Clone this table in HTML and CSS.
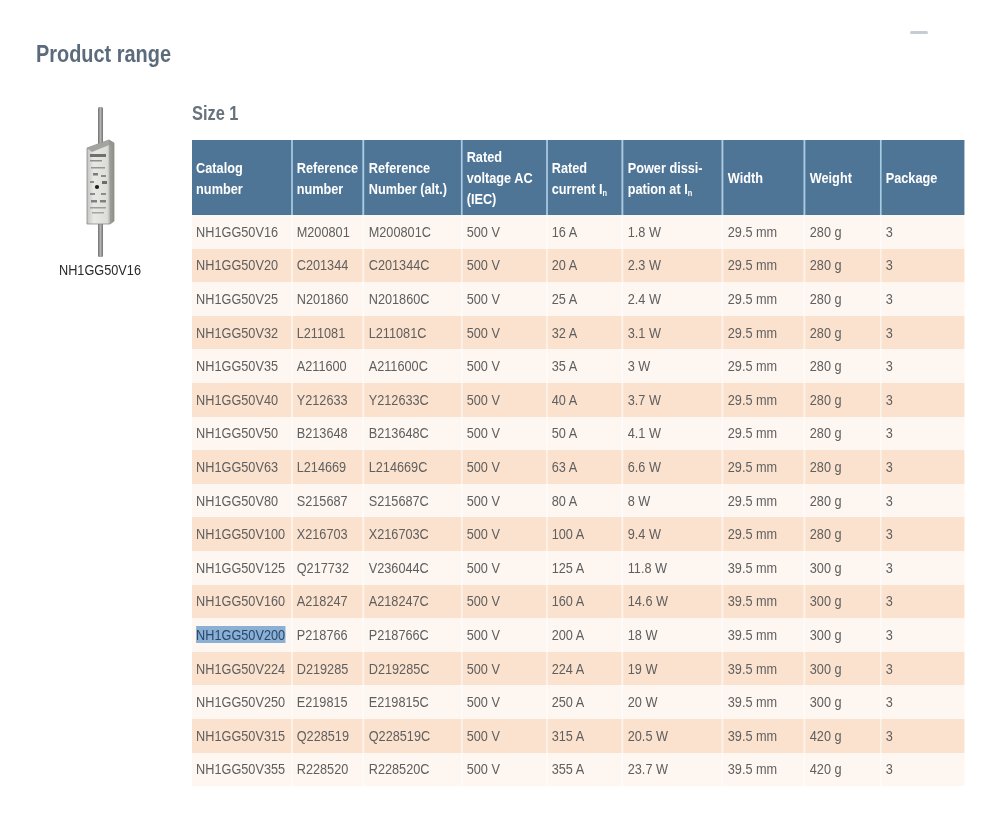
FILE: index.html
```html
<!DOCTYPE html>
<html lang="en">
<head>
<meta charset="utf-8">
<title>Product range</title>
<link rel="stylesheet" href="styles.css">
</head>
<body>
<div class="page">
  <header class="top">
    <h1 class="title">Product range</h1>
    <span class="smudge"></span>
  </header>
  <div class="main">
    <aside class="figure">
      <svg class="fuse" width="60" height="150" viewBox="0 0 60 150" aria-hidden="true">
        <defs>
          <linearGradient id="blade" x1="0" x2="1">
            <stop offset="0" stop-color="#6e6e6e"/>
            <stop offset="0.5" stop-color="#b4b4b4"/>
            <stop offset="1" stop-color="#707070"/>
          </linearGradient>
          <linearGradient id="bodyg" x1="0" x2="1">
            <stop offset="0" stop-color="#c4c4c0"/>
            <stop offset="0.25" stop-color="#e8e8e4"/>
            <stop offset="0.75" stop-color="#dcdcd8"/>
            <stop offset="0.85" stop-color="#b3b3af"/>
            <stop offset="1" stop-color="#9a9a96"/>
          </linearGradient>
        </defs>
        <rect x="28" y="0" width="5" height="40" rx="1.5" fill="url(#blade)"/>
        <rect x="28" y="112" width="5" height="38" rx="1.5" fill="url(#blade)"/>
        <path d="M17 41 L39 33 L44 36 L44 114 L40 117 L17 117 Z" fill="url(#bodyg)" stroke="#8a8a86" stroke-width="0.8"/>
        <path d="M17 41 L39 33 L44 36 L22 45 Z" fill="#a3a39f"/>
        <path d="M39 33 L44 36 L44 114 L40 117 Z" fill="#8d8d89" opacity="0.6"/>
        <rect x="20" y="47" width="16" height="3" fill="#707070"/>
        <rect x="20" y="53" width="12" height="1.5" fill="#8f8f8f"/>
        <rect x="21" y="60" width="14" height="1.5" fill="#959595"/>
        <rect x="23" y="66" width="5" height="2.5" fill="#7c7c7c"/>
        <rect x="31" y="68" width="5" height="2" fill="#8c8c8c"/>
        <rect x="20" y="74" width="4" height="2" fill="#8c8c8c"/>
        <rect x="32" y="74" width="5" height="3" fill="#6c6c6c"/>
        <circle cx="27" cy="80" r="2.1" fill="#1a1a1a"/>
        <rect x="20" y="86" width="5" height="2" fill="#8c8c8c"/>
        <rect x="31" y="86" width="5" height="2" fill="#8c8c8c"/>
        <rect x="21" y="93" width="6" height="2.5" fill="#808080"/>
        <rect x="30" y="93" width="6" height="2.5" fill="#808080"/>
        <rect x="20" y="100" width="16" height="1.5" fill="#9d9d9d"/>
        <rect x="22" y="105" width="12" height="1.5" fill="#a4a4a4"/>
      </svg>
      <p class="caption">NH1GG50V16</p>
    </aside>
    <section class="range">
      <h2 class="size">Size 1</h2>
      <table class="grid">
        <colgroup>
          <col class="c1"><col class="c2"><col class="c3"><col class="c4"><col class="c5"><col class="c6"><col class="c7"><col class="c8"><col class="c9">
        </colgroup>
        <thead>
          <tr>
            <th>Catalog<br>number</th>
            <th>Reference<br>number</th>
            <th>Reference<br>Number (alt.)</th>
            <th>Rated<br>voltage AC<br>(IEC)</th>
            <th>Rated<br>current I<sub>n</sub></th>
            <th>Power dissi-<br>pation at I<sub>n</sub></th>
            <th>Width</th>
            <th>Weight</th>
            <th>Package</th>
          </tr>
        </thead>
        <tbody>
          <tr><td>NH1GG50V16</td><td>M200801</td><td>M200801C</td><td>500 V</td><td>16 A</td><td>1.8 W</td><td>29.5 mm</td><td>280 g</td><td>3</td></tr>
          <tr><td>NH1GG50V20</td><td>C201344</td><td>C201344C</td><td>500 V</td><td>20 A</td><td>2.3 W</td><td>29.5 mm</td><td>280 g</td><td>3</td></tr>
          <tr><td>NH1GG50V25</td><td>N201860</td><td>N201860C</td><td>500 V</td><td>25 A</td><td>2.4 W</td><td>29.5 mm</td><td>280 g</td><td>3</td></tr>
          <tr><td>NH1GG50V32</td><td>L211081</td><td>L211081C</td><td>500 V</td><td>32 A</td><td>3.1 W</td><td>29.5 mm</td><td>280 g</td><td>3</td></tr>
          <tr><td>NH1GG50V35</td><td>A211600</td><td>A211600C</td><td>500 V</td><td>35 A</td><td>3 W</td><td>29.5 mm</td><td>280 g</td><td>3</td></tr>
          <tr><td>NH1GG50V40</td><td>Y212633</td><td>Y212633C</td><td>500 V</td><td>40 A</td><td>3.7 W</td><td>29.5 mm</td><td>280 g</td><td>3</td></tr>
          <tr><td>NH1GG50V50</td><td>B213648</td><td>B213648C</td><td>500 V</td><td>50 A</td><td>4.1 W</td><td>29.5 mm</td><td>280 g</td><td>3</td></tr>
          <tr><td>NH1GG50V63</td><td>L214669</td><td>L214669C</td><td>500 V</td><td>63 A</td><td>6.6 W</td><td>29.5 mm</td><td>280 g</td><td>3</td></tr>
          <tr><td>NH1GG50V80</td><td>S215687</td><td>S215687C</td><td>500 V</td><td>80 A</td><td>8 W</td><td>29.5 mm</td><td>280 g</td><td>3</td></tr>
          <tr><td>NH1GG50V100</td><td>X216703</td><td>X216703C</td><td>500 V</td><td>100 A</td><td>9.4 W</td><td>29.5 mm</td><td>280 g</td><td>3</td></tr>
          <tr><td>NH1GG50V125</td><td>Q217732</td><td>V236044C</td><td>500 V</td><td>125 A</td><td>11.8 W</td><td>39.5 mm</td><td>300 g</td><td>3</td></tr>
          <tr><td>NH1GG50V160</td><td>A218247</td><td>A218247C</td><td>500 V</td><td>160 A</td><td>14.6 W</td><td>39.5 mm</td><td>300 g</td><td>3</td></tr>
          <tr><td><span class="selected">NH1GG50V200</span></td><td>P218766</td><td>P218766C</td><td>500 V</td><td>200 A</td><td>18 W</td><td>39.5 mm</td><td>300 g</td><td>3</td></tr>
          <tr><td>NH1GG50V224</td><td>D219285</td><td>D219285C</td><td>500 V</td><td>224 A</td><td>19 W</td><td>39.5 mm</td><td>300 g</td><td>3</td></tr>
          <tr><td>NH1GG50V250</td><td>E219815</td><td>E219815C</td><td>500 V</td><td>250 A</td><td>20 W</td><td>39.5 mm</td><td>300 g</td><td>3</td></tr>
          <tr><td>NH1GG50V315</td><td>Q228519</td><td>Q228519C</td><td>500 V</td><td>315 A</td><td>20.5 W</td><td>39.5 mm</td><td>420 g</td><td>3</td></tr>
          <tr><td>NH1GG50V355</td><td>R228520</td><td>R228520C</td><td>500 V</td><td>355 A</td><td>23.7 W</td><td>39.5 mm</td><td>420 g</td><td>3</td></tr>
        </tbody>
      </table>
    </section>
  </div>
</div>
</body>
</html>
```
FILE: styles.css
```css
* { box-sizing: border-box; }

html, body {
  margin: 0;
  padding: 0;
  background: #ffffff;
}

body {
  font-family: "Liberation Sans", Arial, sans-serif;
  color: #5f5f5f;
}

.page {
  width: 1000px;
  height: 815px;
  overflow: hidden;
}

.top {
  display: flex;
  align-items: flex-start;
  padding: 31px 0 0 36px;
}

/* the source uses a condensed face; Liberation Sans is narrowed to match */
.title {
  margin: 9px 0 0 0;
  font-size: 24px;
  line-height: 28px;
  font-weight: bold;
  color: #5b6b7b;
  transform: scaleX(0.83);
  transform-origin: left center;
}

.smudge {
  margin-left: auto;
  margin-right: 72px;
  width: 18px;
  height: 3px;
  border-radius: 2px;
  background: #c7ccd2;
  filter: blur(0.6px);
}

.main {
  display: flex;
  align-items: flex-start;
  padding: 33px 0 0 8px;
}

.figure {
  width: 184px;
  flex: none;
  display: flex;
  flex-direction: column;
  align-items: center;
}

.fuse {
  display: block;
  margin-top: 6px;
}

.caption {
  margin: 3px 0 0 0;
  font-size: 15.5px;
  line-height: 20px;
  color: #2a2a2a;
  transform: scaleX(0.82);
}

.range {
  flex: none;
}

.size {
  margin: 0 0 15px 0;
  font-size: 20px;
  line-height: 24px;
  font-weight: bold;
  color: #67727e;
  transform: scaleX(0.82);
  transform-origin: left center;
}

/* widths are given before the horizontal narrowing (x 0.82) */
.grid {
  width: 941.5px;
  table-layout: fixed;
  border-collapse: separate;
  border-spacing: 0;
  font-size: 15.5px;
  transform: scaleX(0.82);
  transform-origin: 0 0;
}

.c1 { width: 120.7px; }
.c2 { width: 87.8px; }
.c3 { width: 119.5px; }
.c4 { width: 103.7px; }
.c5 { width: 92.7px; }
.c6 { width: 122px; }
.c7 { width: 100px; }
.c8 { width: 92.7px; }
.c9 { width: 102.4px; }

.grid th {
  height: 75px;
  padding: 0 4px 0 5px;
  background: #4f7596;
  color: #ffffff;
  font-weight: bold;
  text-align: left;
  vertical-align: middle;
  line-height: 21px;
  white-space: nowrap;
  border-left: 2.4px solid #a9cce6;
}

.grid th:first-child {
  border-left: none;
  padding-left: 5px;
}

.grid th sub {
  font-size: 9px;
  vertical-align: -2px;
  line-height: 0;
}

.grid td {
  height: 33.6px;
  padding: 0 4px 0 5px;
  white-space: nowrap;
  vertical-align: middle;
  line-height: 20px;
  color: #5f5f5f;
  border-left: 2.4px solid rgba(255, 255, 255, 0.55);
}

.grid td:first-child {
  border-left: none;
  padding-left: 5px;
}

.grid tbody tr:nth-child(odd) td {
  background: #fdf6f1;
}

.grid tbody tr:nth-child(even) td {
  background: #fbe2ce;
}

.selected {
  background: #8cb0d3;
  color: #27486c;
}
```
